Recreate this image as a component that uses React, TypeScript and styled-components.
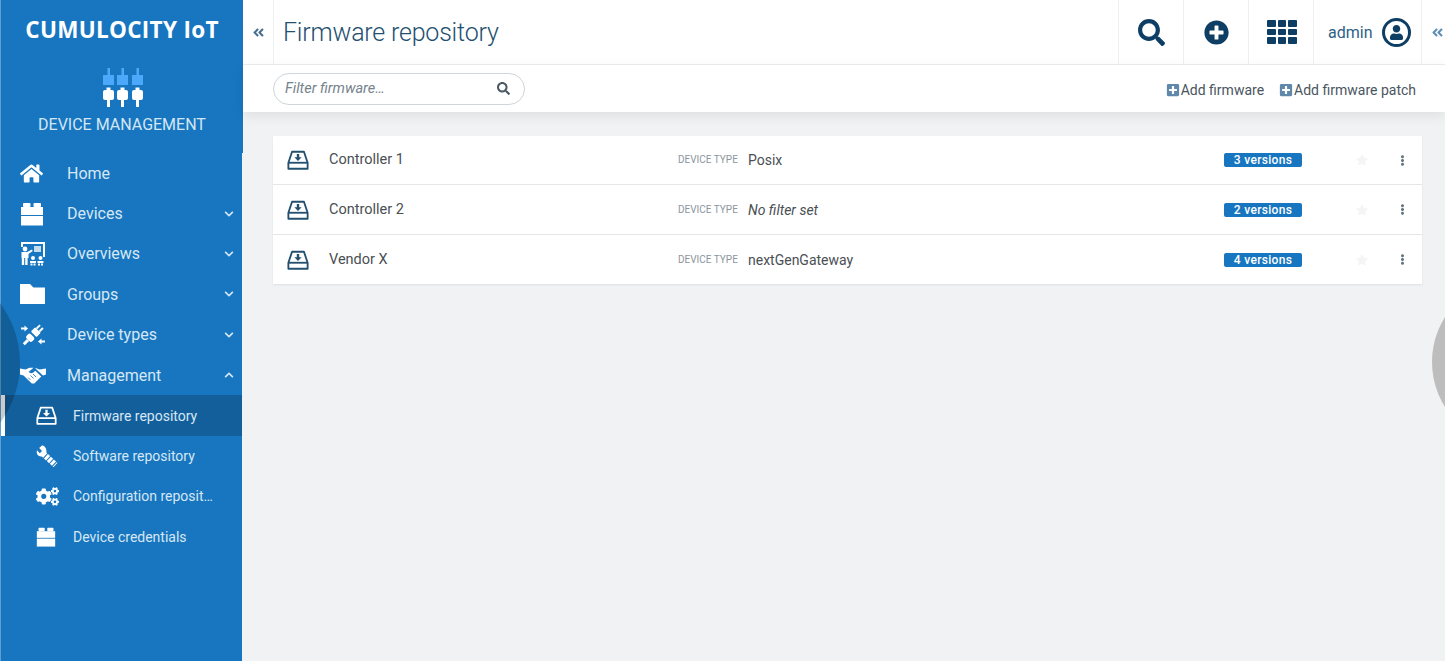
import { FC, ReactNode } from "react";
import styled, { createGlobalStyle } from "styled-components";
import {
  FaHome,
  FaCogs,
  FaSearch,
  FaPlusCircle,
  FaChevronDown,
  FaChevronUp,
  FaAngleDoubleLeft,
  FaPlusSquare,
  FaStar,
  FaEllipsisV,
  FaUser,
} from "react-icons/fa";

const BLUE = "#1776bf";
const NAVY = "#0e3e63";

const GlobalStyle = createGlobalStyle`
  html, body {
    margin: 0;
    padding: 0;
    height: 100%;
    background: #f1f2f4;
    font-family: Roboto, "Liberation Sans", sans-serif;
  }
  * { box-sizing: border-box; }
`;

const BrickIcon: FC<{ size: number }> = ({ size }) => (
  <svg width={size} height={size} viewBox="0 0 24 24" fill="currentColor">
    <rect x="3" y="1" width="7.5" height="4" rx="1" />
    <rect x="13.5" y="1" width="7.5" height="4" rx="1" />
    <rect x="1" y="5" width="22" height="8" />
    <rect x="1" y="14" width="22" height="9.5" />
  </svg>
);

const TrayIcon: FC<{ size: number }> = ({ size }) => (
  <svg width={size} height={size} viewBox="0 0 24 24" fill="none">
    <path
      d="M5.5 3h13l4 12v6.5H1.5V15z"
      stroke="currentColor"
      strokeWidth="2"
      strokeLinejoin="round"
    />
    <path d="M2 15h20" stroke="currentColor" strokeWidth="2" />
    <path d="M10.7 5.5h2.6V9H16l-4 4-4-4h2.7z" fill="currentColor" />
  </svg>
);

const FolderIcon: FC = () => (
  <svg width="25" height="20" viewBox="0 0 25 20" fill="currentColor">
    <path d="M0 0h10l3.500 3.500H25V20H0z" />
  </svg>
);

const HandshakeIcon: FC = () => (
  <svg width="26" height="17" viewBox="0 0 26 17" fill="currentColor">
    <path d="M0 1.500 5.500 2.500 9.500.8h4L8.800 4.800c1 1.700 3 1.900 4.500.7l2-1.700 6 5.700-7 7h-2.500L3.500 8.500 0 7.500z" />
    <path d="M15 .8l4.500 1.700L26 1.500v6l-3 1-6.500-6z" />
    <path
      d="M8 10.500l2.500 2.500M10.500 8.500l3 3M13 7l3 3"
      stroke={BLUE}
      strokeWidth="0.8"
      fill="none"
    />
  </svg>
);

const OverviewIcon: FC = () => (
  <svg width="26" height="26" viewBox="0 0 26 26" fill="currentColor">
    <path d="M1 1h24v15h-2V3H3v3H1z" />
    <rect x="14" y="5" width="7" height="6" opacity="0.75" />
    <circle cx="5" cy="8" r="2.400" />
    <path d="M1.500 11h5.500l5-2.500.7 1.500L8.500 13v4H1.500z" />
    <path d="M1.800 17h2.400v7H1.800zM5.200 17h2.400v7H5.200z" />
    <circle cx="13" cy="17" r="2" />
    <circle cx="20.500" cy="17" r="2" />
    <path d="M10 20h6v2h-6zM17.500 20h6v2h-6zM10.500 22.500h2v2h-2zM13.500 22.500h2v2h-2zM18 22.500h2v2h-2zM21 22.500h2v2h-2z" />
  </svg>
);

const PlugsIcon: FC = () => (
  <svg width="26" height="26" viewBox="0 0 26 26" fill="currentColor">
    <g transform="rotate(45 13 13)">
      <rect x="9" y="6" width="8" height="6" rx="1" />
      <rect x="10" y="1" width="2" height="5" />
      <rect x="14" y="1" width="2" height="5" />
      <rect x="9" y="14" width="8" height="6" rx="2" />
      <rect x="11.500" y="20" width="3" height="6" />
    </g>
    <path d="M1 5.500h3.500V3.500L8 6.500l-3.500 3V7.500H1zM25 18.500h-3.500v-2l-3.500 3 3.500 3v-2H25z" />
  </svg>
);

const ToolsIcon: FC = () => (
  <svg width="22" height="22" viewBox="0 0 22 22" fill="currentColor">
    <path d="M6 .5 3.200 3 6 6 3.800 8.200 1 5.300C0 8 1.500 11.500 5 11.500l2.500-.5 3-4C10.500 3 8.500.5 6 .5z" />
    <path
      d="M7 8.500 19.500 20"
      fill="none"
      stroke="currentColor"
      strokeWidth="6"
      strokeDasharray="3 1"
    />
  </svg>
);

const LogoIcon: FC = () => (
  <LogoSvg width="40" height="40" viewBox="0 0 40 40">
    {[0, 14, 29].map((x) => (
      <g key={x}>
        <rect x={x + 4.5} y="0" width="2.500" height="7" fill="#4ca8fb" />
        <rect x={x} y="7" width="11" height="10" fill="#4ca8fb" />
        <rect x={x} y="22" width="11" height="10" rx="2" fill="#fff" />
        <rect x={x + 3.5} y="19.500" width="4" height="3" fill="#fff" />
        <rect x={x + 4} y="32" width="3" height="7" fill="#fff" />
      </g>
    ))}
  </LogoSvg>
);

interface NavEntry {
  label: string;
  icon: ReactNode;
  chevron?: "up" | "down";
}

const mainNav: NavEntry[] = [
  { label: "Home", icon: <FaHome size={23} /> },
  { label: "Devices", icon: <BrickIcon size={24} />, chevron: "down" },
  { label: "Overviews", icon: <OverviewIcon />, chevron: "down" },
  { label: "Groups", icon: <FolderIcon />, chevron: "down" },
  { label: "Device types", icon: <PlugsIcon />, chevron: "down" },
  { label: "Management", icon: <HandshakeIcon />, chevron: "up" },
];

const subNav: NavEntry[] = [
  { label: "Firmware repository", icon: <TrayIcon size={21} /> },
  { label: "Software repository", icon: <ToolsIcon /> },
  { label: "Configuration reposit…", icon: <FaCogs size={23} /> },
  { label: "Device credentials", icon: <BrickIcon size={20} /> },
];

const firmware = [
  { name: "Controller 1", type: "Posix", versions: 3 },
  { name: "Controller 2", type: "No filter set", versions: 2, empty: true },
  { name: "Vendor X", type: "nextGenGateway", versions: 4 },
];

export default function App() {
  return (
    <Page>
      <GlobalStyle />
      <Sidebar>
        <Brand>
          <BrandName>CUMULOCITY IoT</BrandName>
          <LogoIcon />
          <AppName>DEVICE MANAGEMENT</AppName>
        </Brand>
        <Nav>
          {mainNav.map((item) => (
            <NavRow key={item.label}>
              <NavIcon>{item.icon}</NavIcon>
              <NavLabel>{item.label}</NavLabel>
              {item.chevron === "down" && <FaChevronDown size={10} />}
              {item.chevron === "up" && <FaChevronUp size={10} />}
            </NavRow>
          ))}
          {subNav.map((item, i) => (
            <SubRow key={item.label} $active={i === 0}>
              <SubIcon>{item.icon}</SubIcon>
              <span>{item.label}</span>
            </SubRow>
          ))}
        </Nav>
      </Sidebar>

      <Main>
        <Header>
          <CollapseCell>
            <FaAngleDoubleLeft size={13} />
          </CollapseCell>
          <Title>Firmware repository</Title>
          <HeaderCell>
            <FaSearch size={27} />
          </HeaderCell>
          <HeaderCell>
            <FaPlusCircle size={25} />
          </HeaderCell>
          <HeaderCell>
            <AppGrid>
              {Array.from({ length: 9 }).map((_, i) => (
                <AppDot key={i} />
              ))}
            </AppGrid>
          </HeaderCell>
          <UserCell>
            admin
            <UserRing>
              <FaUser size={15} />
            </UserRing>
          </UserCell>
          <RightCollapse>
            <FaAngleDoubleLeft size={13} />
          </RightCollapse>
        </Header>

        <Toolbar>
          <FilterBox>
            <FilterText>Filter firmware…</FilterText>
            <FaSearch size={13} />
          </FilterBox>
          <ToolbarActions>
            <ActionLink>
              <FaPlusSquare size={14} />
              Add firmware
            </ActionLink>
            <ActionLink>
              <FaPlusSquare size={14} />
              Add firmware patch
            </ActionLink>
          </ToolbarActions>
        </Toolbar>

        <List>
          {firmware.map((row) => (
            <Row key={row.name}>
              <RowIcon>
                <TrayIcon size={22} />
              </RowIcon>
              <RowName>{row.name}</RowName>
              <TypeLabel>DEVICE TYPE</TypeLabel>
              <TypeValue $empty={row.empty}>{row.type}</TypeValue>
              <Badge>{row.versions} versions</Badge>
              <Star>
                <FaStar size={12} />
              </Star>
              <Kebab>
                <FaEllipsisV size={11} />
              </Kebab>
            </Row>
          ))}
        </List>
      </Main>

      <LeftCircle />
      <RightCircle />
    </Page>
  );
}

const Page = styled.div`
  position: relative;
  display: flex;
  width: 100%;
  height: 100vh;
  overflow: hidden;
  background: #f1f2f4;
`;

const Sidebar = styled.aside`
  flex: 0 0 243px;
  display: flex;
  flex-direction: column;
`;

const Brand = styled.div`
  height: 153px;
  padding-top: 16px;
  display: flex;
  flex-direction: column;
  align-items: center;
  background: ${BLUE};
  border-left: 1px solid #5d9fd2;
  color: #fff;
`;

const BrandName = styled.div`
  font-family: "Open Sans", sans-serif;
  font-weight: 700;
  font-size: 22.5px;
  line-height: 28px;
  letter-spacing: 0.3px;
  white-space: nowrap;
`;

const LogoSvg = styled.svg`
  margin-top: 24px;
  display: block;
  position: relative;
  left: 1px;
`;

const AppName = styled.div`
  margin-top: 8px;
  font-size: 16px;
  line-height: 18px;
  color: #d4e6f5;
`;

const Nav = styled.nav`
  flex: 1;
  width: 242px;
  background: ${BLUE};
  border-left: 1px solid #5d9fd2;
`;

const NavRow = styled.div`
  display: flex;
  align-items: center;
  height: 40.4px;
  padding: 0 8px 0 19px;
  color: #d6e7f5;
  font-size: 16px;

  svg {
    flex: none;
  }
`;

const NavIcon = styled.span`
  flex: 0 0 47px;
  display: flex;
  align-items: center;
  color: #fff;
`;

const NavLabel = styled.span`
  flex: 1;
`;

const SubRow = styled.div<{ $active?: boolean }>`
  display: flex;
  align-items: center;
  height: 40.4px;
  padding-left: 35px;
  color: #d6e7f5;
  font-size: 14px;
  white-space: nowrap;
  background: ${({ $active }) => ($active ? "#135f9c" : "transparent")};
  box-shadow: ${({ $active }) => ($active ? "inset 4px 0 0 #fff" : "none")};
`;

const SubIcon = styled.span`
  flex: 0 0 37px;
  display: flex;
  align-items: center;
  color: #fff;
`;

const Main = styled.main`
  flex: 1;
  min-width: 0;
  display: flex;
  flex-direction: column;
`;

const Header = styled.header`
  display: flex;
  align-items: stretch;
  height: 65px;
  background: #fff;
  border-bottom: 1px solid #eaecee;
  color: ${NAVY};
`;

const CollapseCell = styled.div`
  flex: 0 0 31px;
  display: flex;
  align-items: center;
  justify-content: center;
  border-right: 1px solid #eef0f1;
  color: #47708f;
`;

const Title = styled.h1`
  flex: 1;
  margin: 0;
  padding-left: 9px;
  align-self: center;
  font-size: 25px;
  font-weight: 300;
  color: #23506f;
  letter-spacing: -0.2px;
`;

const HeaderCell = styled.div`
  flex: 0 0 65px;
  display: flex;
  align-items: center;
  justify-content: center;
  border-left: 1px solid #eef0f1;
`;

const AppGrid = styled.div`
  display: grid;
  grid-template-columns: repeat(3, 8.5px);
  grid-auto-rows: 6.5px;
  gap: 2px;
  margin-left: 2px;
`;

const AppDot = styled.span`
  background: ${NAVY};
  border-radius: 1px;
`;

const UserCell = styled.div`
  flex: 0 0 108px;
  display: flex;
  align-items: center;
  gap: 10px;
  padding-left: 14px;
  border-left: 1px solid #eef0f1;
  font-size: 16px;
  color: #2d5f86;
`;

const UserRing = styled.span`
  width: 29px;
  height: 29px;
  border: 3px solid ${NAVY};
  border-radius: 50%;
  display: flex;
  align-items: center;
  justify-content: center;
  color: ${NAVY};
`;

const RightCollapse = styled.div`
  flex: 0 0 24px;
  display: flex;
  align-items: center;
  justify-content: flex-end;
  padding-right: 1px;
  border-left: 1px solid #eef0f1;
  color: #5d8fb5;
`;

const Toolbar = styled.div`
  display: flex;
  align-items: center;
  justify-content: space-between;
  height: 47px;
  padding: 0 29px 0 30px;
  background: #fff;
  box-shadow: 0 4px 12px rgba(0, 0, 0, 0.08);
  position: relative;
`;

const FilterBox = styled.div`
  width: 252px;
  height: 32px;
  display: flex;
  align-items: center;
  justify-content: space-between;
  padding: 0 14px 0 11px;
  border: 1px solid #cfd5d9;
  border-radius: 16px;
  color: #4a5a66;
`;

const FilterText = styled.span`
  font-size: 14.5px;
  font-style: italic;
  color: #76838d;
`;

const ToolbarActions = styled.div`
  display: flex;
  gap: 15px;
  padding-top: 3px;
`;

const ActionLink = styled.span`
  display: flex;
  align-items: center;
  font-size: 14px;
  color: #4a5560;

  svg {
    color: #5f88ab;
    margin-right: 1px;
  }
`;

const List = styled.div`
  margin: 24px 23px 0 30px;
  box-shadow: 0 1px 2px rgba(0, 0, 0, 0.08);
`;

const Row = styled.div`
  display: grid;
  grid-template-columns: 56px 349px 70px 476px 78px 66px 1fr;
  align-items: center;
  height: 49px;
  background: #fff;
  border-bottom: 1px solid #e4e6e8;
  font-size: 14px;
  line-height: 20px;
  color: #4a4f54;

  &:nth-child(2) {
    height: 50px;
  }

  &:last-child {
    border-bottom: none;
  }
`;

const RowIcon = styled.span`
  display: flex;
  padding-left: 14px;
  color: #23506f;
`;

const RowName = styled.span`
  font-size: 14.5px;
`;

const TypeLabel = styled.span`
  font-size: 10px;
  color: #8b959d;
`;

const TypeValue = styled.span<{ $empty?: boolean }>`
  font-style: ${({ $empty }) => ($empty ? "italic" : "normal")};
`;

const Badge = styled.span`
  grid-column: 5;
  height: 14px;
  background: ${BLUE};
  border-radius: 2px;
  color: #fff;
  font-size: 12px;
  font-weight: 500;
  line-height: 14px;
  text-align: center;
  letter-spacing: 0.3px;
`;

const Star = styled.span`
  display: flex;
  justify-content: flex-end;
  color: #f5f5f6;
`;

const Kebab = styled.span`
  display: flex;
  justify-content: flex-end;
  padding-right: 14px;
  color: #66757f;
`;

const LeftCircle = styled.div`
  position: absolute;
  left: -180px;
  top: 263px;
  width: 200px;
  height: 200px;
  border-radius: 50%;
  background: rgba(0, 0, 0, 0.2);
`;

const RightCircle = styled.div`
  position: absolute;
  left: 1432px;
  top: 278px;
  width: 168px;
  height: 168px;
  border-radius: 50%;
  background: #bdbdbd;
`;
